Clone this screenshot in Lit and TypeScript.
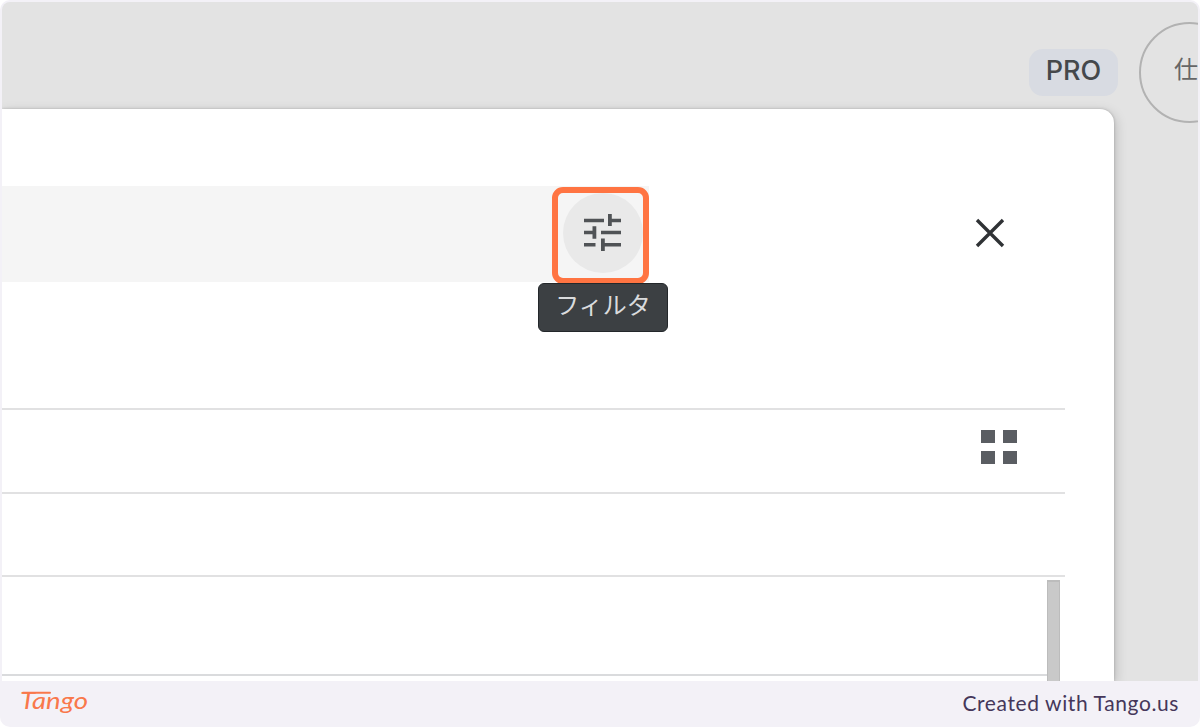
import { LitElement, html, css } from 'lit';
import { customElement } from 'lit/decorators.js';

@customElement('filter-button')
export class FilterButton extends LitElement {
  static styles = css`
    :host {
      display: block;
      position: relative;
      box-sizing: border-box;
      width: 97px;
      height: 97px;
      margin-top: 2px;
      border: 6px solid #ff7442;
      border-radius: 11px;
    }

    .circle {
      display: flex;
      align-items: center;
      justify-content: center;
      width: 80px;
      height: 80px;
      margin-left: 5px;
      border-radius: 50%;
      background: #e9e9e9;
    }

    svg {
      display: block;
      margin: -2px 0 0 -2px;
      fill: #505356;
    }

    .tooltip {
      position: absolute;
      top: 90px;
      left: -20px;
      box-sizing: border-box;
      width: 130px;
      height: 49px;
      border: 1px solid #23272a;
      border-radius: 6px;
      background: #3c4043;
      color: #d9dbdd;
      font-size: 24px;
      line-height: 44px;
      text-align: center;
      white-space: nowrap;
    }
  `;

  render() {
    return html`
      <div class="circle">
        <svg width="40" height="40" viewBox="0 0 40 40">
          <path d="M2 6.700h20v3.600H2z M26 2h3.800v4.700H39v3.600h-9.200V14H26z" />
          <path d="M10.500 14.200h3.800v12.600h-3.800v-4.500H2v-3.600h8.500z M19 18.700h20v3.600H19z" />
          <path d="M2 31h11.500v3.600H2z M19 26.500h3.800V31H39v3.600H22.800V39H19z" />
        </svg>
      </div>
      <div class="tooltip">フィルタ</div>
    `;
  }
}

@customElement('app-root')
export class AppRoot extends LitElement {
  static styles = css`
    :host {
      display: flex;
      flex-direction: column;
      box-sizing: border-box;
      width: 1200px;
      height: 727px;
      padding: 2px 2px 0;
      border-radius: 10px;
      overflow: hidden;
      background: #f3f1f7;
      font-family: Roboto, 'Noto Sans CJK JP', sans-serif;
    }

    .shot {
      display: flex;
      flex-direction: column;
      height: 679px;
      border-radius: 8px 8px 0 0;
      overflow: hidden;
      background: #e3e3e3;
    }

    .topbar {
      display: flex;
      justify-content: flex-end;
      height: 107px;
      flex: none;
    }

    .pro {
      width: 89px;
      height: 47px;
      margin: 47px 21px 0 0;
      border-radius: 14px;
      background: #d8dbe2;
      color: #45484b;
      font-family: Inter, sans-serif;
      font-size: 27px;
      font-weight: 500;
      line-height: 44px;
      text-align: center;
    }

    .avatar {
      box-sizing: border-box;
      flex: none;
      width: 101px;
      height: 101px;
      margin: 20px -42px 0 0;
      padding-left: 33px;
      border: 2px solid #b2b2b2;
      border-radius: 50%;
      color: #666;
      font-size: 24px;
      line-height: 93px;
    }

    .dialog {
      display: flex;
      flex-direction: column;
      box-sizing: border-box;
      width: 1112px;
      flex: 1;
      padding-top: 77px;
      border-radius: 0 14px 0 0;
      background: #fff;
      box-shadow: 0 0 3px rgba(0, 0, 0, 0.22), 2px 3px 12px rgba(0, 0, 0, 0.17);
    }

    .search-row {
      display: flex;
      align-items: center;
      height: 96px;
      flex: none;
    }

    .search {
      display: flex;
      justify-content: flex-end;
      align-items: center;
      width: 647px;
      height: 96px;
      background: #f5f5f5;
    }

    .close {
      display: block;
      margin-left: 325px;
      margin-top: -2px;
      fill: none;
      stroke: #2f3235;
      stroke-width: 3.4;
    }

    .list {
      display: flex;
      flex-direction: column;
      width: 1063px;
      margin-top: 126px;
    }

    .row {
      box-sizing: border-box;
      height: 83px;
      border-top: 2px solid #e1e1e2;
    }

    .tools {
      display: flex;
      justify-content: flex-end;
      height: 84px;
      padding: 20px 48px 0 0;
    }

    .grid {
      display: grid;
      grid-template-columns: 14px 14px;
      grid-template-rows: 13px 13px;
      gap: 8px;
    }

    .grid span {
      background: #5a5d62;
    }

    .results {
      display: flex;
      height: 104px;
      padding-top: 3px;
    }

    .result {
      box-sizing: border-box;
      width: 1045px;
      height: 96px;
      border-bottom: 2px solid #dadbdd;
    }

    .scrollbar {
      box-sizing: border-box;
      width: 13px;
      height: 103px;
      border: 1px solid #bcbcbc;
      border-top-width: 2px;
      background: #c9c9c9;
    }

    .footer {
      display: flex;
      align-items: center;
      justify-content: space-between;
      height: 46px;
      padding: 0 19px 0 18px;
    }

    .brand {
      display: block;
      overflow: visible;
    }

    .brand text {
      fill: #f9784b;
      font-family: Lato, sans-serif;
      font-size: 23px;
      font-style: italic;
      font-weight: 400;
    }

    .brand path {
      fill: none;
      stroke: #f9784b;
      stroke-width: 2;
      stroke-linecap: round;
    }

    .credit {
      color: #45375a;
      font-family: Lato, sans-serif;
      font-size: 21px;
      letter-spacing: 0.6px;
      line-height: 44px;
      padding-bottom: 2px;
    }
  `;

  render() {
    return html`
      <div class="shot">
        <div class="topbar">
          <div class="pro">PRO</div>
          <div class="avatar">仕</div>
        </div>
        <div class="dialog">
          <div class="search-row">
            <div class="search"><filter-button></filter-button></div>
            <svg class="close" width="32" height="32" viewBox="0 0 32 32">
              <path d="M3 3l26 26M29 3L3 29" />
            </svg>
          </div>
          <div class="list">
            <div class="row tools">
              <div class="grid"><span></span><span></span><span></span><span></span></div>
            </div>
            <div class="row"></div>
            <div class="row results">
              <div class="result"></div>
              <div class="scrollbar"></div>
            </div>
          </div>
        </div>
      </div>
      <div class="footer">
        <svg class="brand" width="70" height="34" viewBox="0 0 70 34">
          <text x="0" y="21.500" textLength="68" lengthAdjust="spacingAndGlyphs">Tango</text>
          <path d="M3 5.800h27" />
        </svg>
        <div class="credit">Created with Tango.us</div>
      </div>
    `;
  }
}
